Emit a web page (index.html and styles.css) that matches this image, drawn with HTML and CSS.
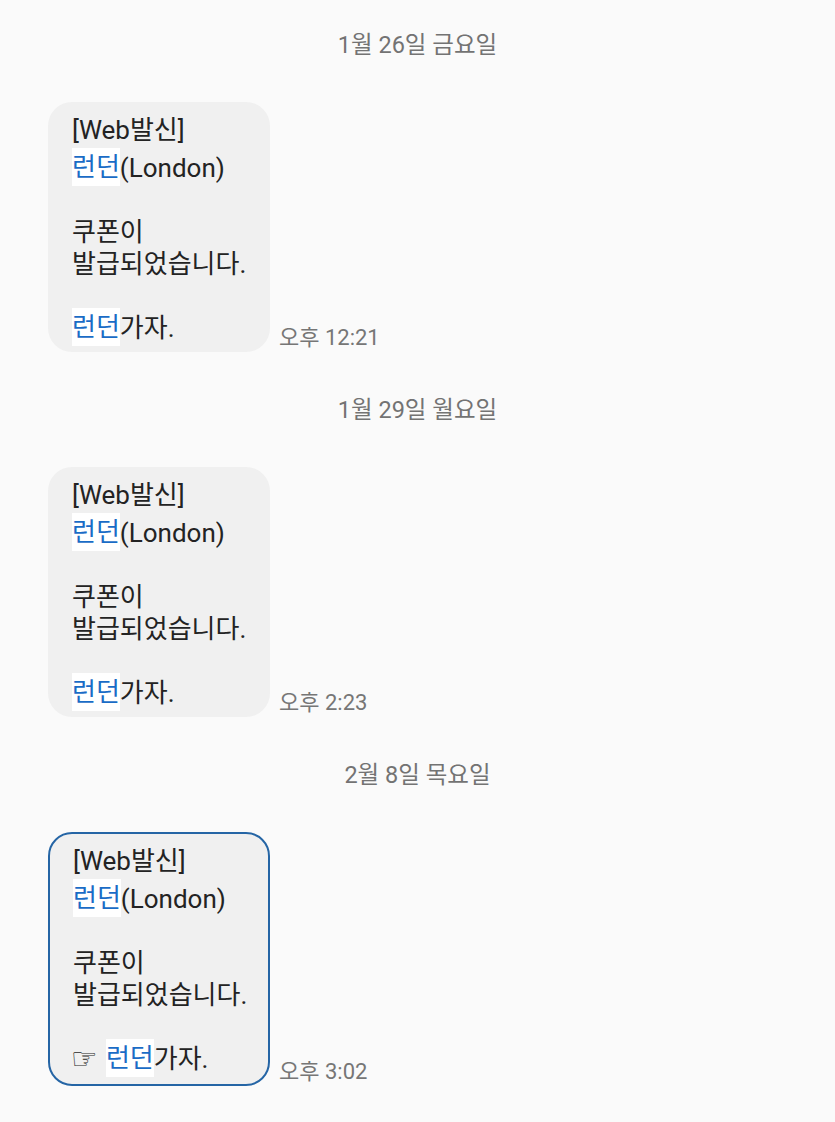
FILE: index.html
```html
<!DOCTYPE html>
<html lang="ko">
<head>
<meta charset="utf-8">
<link rel="stylesheet" href="styles.css">
</head>
<body>
<div class="thread">
  <section class="day">
    <div class="date">1월 26일 금요일</div>
    <div class="row">
      <div class="bubble">
        <div class="line first">[Web발신]</div>
        <div class="line"><span class="hl">런던</span>(London)</div>
        <div class="line"></div>
        <div class="line">쿠폰이</div>
        <div class="line">발급되었습니다.</div>
        <div class="line"></div>
        <div class="line"><span class="hl">런던</span>가자.</div>
      </div>
      <div class="time">오후 12:21</div>
    </div>
  </section>
  <section class="day">
    <div class="date">1월 29일 월요일</div>
    <div class="row">
      <div class="bubble">
        <div class="line first">[Web발신]</div>
        <div class="line"><span class="hl">런던</span>(London)</div>
        <div class="line"></div>
        <div class="line">쿠폰이</div>
        <div class="line">발급되었습니다.</div>
        <div class="line"></div>
        <div class="line"><span class="hl">런던</span>가자.</div>
      </div>
      <div class="time">오후 2:23</div>
    </div>
  </section>
  <section class="day">
    <div class="date">2월 8일 목요일</div>
    <div class="row">
      <div class="bubble selected">
        <div class="line first">[Web발신]</div>
        <div class="line"><span class="hl">런던</span>(London)</div>
        <div class="line"></div>
        <div class="line">쿠폰이</div>
        <div class="line">발급되었습니다.</div>
        <div class="line"></div>
        <div class="line"><span class="hand">☞</span><span class="hl">런던</span>가자.</div>
      </div>
      <div class="time">오후 3:02</div>
    </div>
  </section>
</div>
</body>
</html>
```
FILE: styles.css
```css
html, body {
  margin: 0;
  padding: 0;
  background: #fafafa;
}
body {
  font-family: Roboto, "Noto Sans CJK KR", sans-serif;
  color: #222;
}
.thread {
  display: flex;
  flex-direction: column;
  padding-top: 30px;
}
.day {
  display: flex;
  flex-direction: column;
  gap: 42px;
  padding-bottom: 43px;
}
.date {
  text-align: center;
  font-size: 23.5px;
  line-height: 30px;
  color: #737373;
}
.row {
  display: flex;
  align-items: flex-end;
  gap: 9px;
  padding-left: 48px;
}
.bubble {
  width: 222px;
  box-sizing: border-box;
  background: #f0f0f0;
  border-radius: 24px;
  padding: 12px 16px 8px 24px;
  font-size: 26px;
  color: #232323;
}
.bubble.selected {
  border: 2px solid #2565a5;
  padding: 11px 15px 9px 23px;
}
.line {
  height: 32px;
  line-height: 32px;
  white-space: nowrap;
}
.line.first {
  margin-bottom: 6px;
}
.hl {
  display: inline-block;
  background: #ffffff;
  color: #1a6cc6;
  line-height: 38px;
  height: 38px;
  vertical-align: top;
  margin-top: -4px;
}
.hand {
  display: inline-block;
  font-family: "DejaVu Sans", sans-serif;
  font-size: 30px;
  line-height: 32px;
  vertical-align: top;
  color: #2a2a2a;
  margin-left: -2px;
  margin-right: 8px;
}
.time {
  font-size: 22px;
  line-height: 28px;
  color: #767676;
  white-space: nowrap;
}
```
